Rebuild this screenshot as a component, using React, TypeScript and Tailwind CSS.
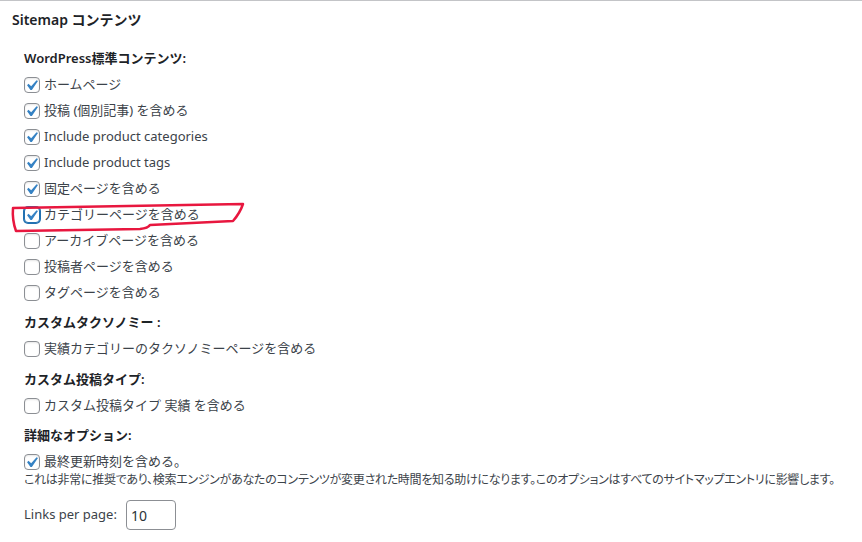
import React from "react";

const FONT = "font-['Noto_Sans','Noto_Sans_CJK_JP',sans-serif]";

function Check({ checked, focused }: { checked?: boolean; focused?: boolean }) {
  return (
    <span
      className={
        "relative inline-block w-4 h-4 shrink-0 rounded-[4px] bg-white border " +
        (focused
          ? "border-[#2271b1] shadow-[0_0_0_1px_#2271b1]"
          : "border-[#8c8f94] shadow-[inset_0_1px_2px_rgba(0,0,0,0.1)]")
      }
    >
      {checked && (
        <svg
          className="absolute left-[-4px] top-[-3px] w-[21px] h-[21px]"
          viewBox="0 0 20 20"
        >
          <path
            d="M14.83 4.89l1.34.94-5.81 8.38H9.02L5.78 9.67l1.34-1.25 2.57 2.4z"
            fill="#3582c4"
          />
        </svg>
      )}
    </span>
  );
}

function Row({ label, checked, focused, h = "h-[26px]" }: { label: string; checked?: boolean; focused?: boolean; h?: string }) {
  return (
    <div className={"flex items-center gap-1 text-[13px] text-[#3c434a] " + h}>
      <Check checked={checked} focused={focused} />
      <span>{label}</span>
    </div>
  );
}

function Head({ label, mt }: { label: string; mt: string }) {
  return (
    <div className={"flex items-center h-[26px] text-[13px] font-semibold text-[#1d2327] " + mt}>
      {label}
    </div>
  );
}

export default function App() {
  return (
    <div className={"relative w-[862px] h-[542px] bg-white overflow-hidden " + FONT}>
      <div className="border-t border-[#c3c4c7]">
        <div className="h-[36px] flex items-center px-3 text-[14px] font-semibold text-[#1d2327]">
          Sitemap コンテンツ
        </div>
        <div className="px-6 mt-[9px]">
          <Head label="WordPress標準コンテンツ:" mt="" />
          <Row label="ホームページ" checked />
          <Row label="投稿 (個別記事) を含める" checked />
          <Row label="Include product categories" checked />
          <Row label="Include product tags" checked />
          <Row label="固定ページを含める" checked />
          <Row label="カテゴリーページを含める" checked focused />
          <Row label="アーカイブページを含める" />
          <Row label="投稿者ページを含める" />
          <Row label="タグページを含める" />
          <Head label="カスタムタクソノミー :" mt="mt-[4px]" />
          <Row label="実績カテゴリーのタクソノミーページを含める" />
          <Head label="カスタム投稿タイプ:" mt="mt-[5px]" />
          <Row label="カスタム投稿タイプ 実績 を含める" />
          <Head label="詳細なオプション:" mt="mt-[4px]" />
          <Row label="最終更新時刻を含める。" checked h="h-[20px] mt-[3px]" />
          <div className="h-[16px] flex items-center text-[12px] text-[#3c434a] whitespace-nowrap tracking-[-0.28px] [font-feature-settings:'palt']">
            これは非常に推奨であり、検索エンジンがあなたのコンテンツが変更された時間を知る助けになります。このオプションはすべてのサイトマップエントリに影響します。
          </div>
          <div className="mt-[12px] flex items-center h-[30px] text-[13px] text-[#3c434a]">
            <span className="w-[102px]">Links per page:</span>
            <div className="w-[50px] h-[30px] border border-[#8c8f94] rounded-[4px] flex items-center px-[4px] text-[14px] text-[#2c3338]">
              10
            </div>
          </div>
        </div>
      </div>
      <svg className="absolute left-0 top-0 pointer-events-none" width="862" height="542">
        <path
          d="M13 208 Q 120 206 243 204 Q 240 213 233 221 Q 190 223 150 225 Q 148 228 140 229 Q 80 230 16 231 Q 12 220 13 208 Z"
          fill="none"
          stroke="#e8173f"
          strokeWidth="2.5"
          strokeLinejoin="round"
        />
      </svg>
    </div>
  );
}
